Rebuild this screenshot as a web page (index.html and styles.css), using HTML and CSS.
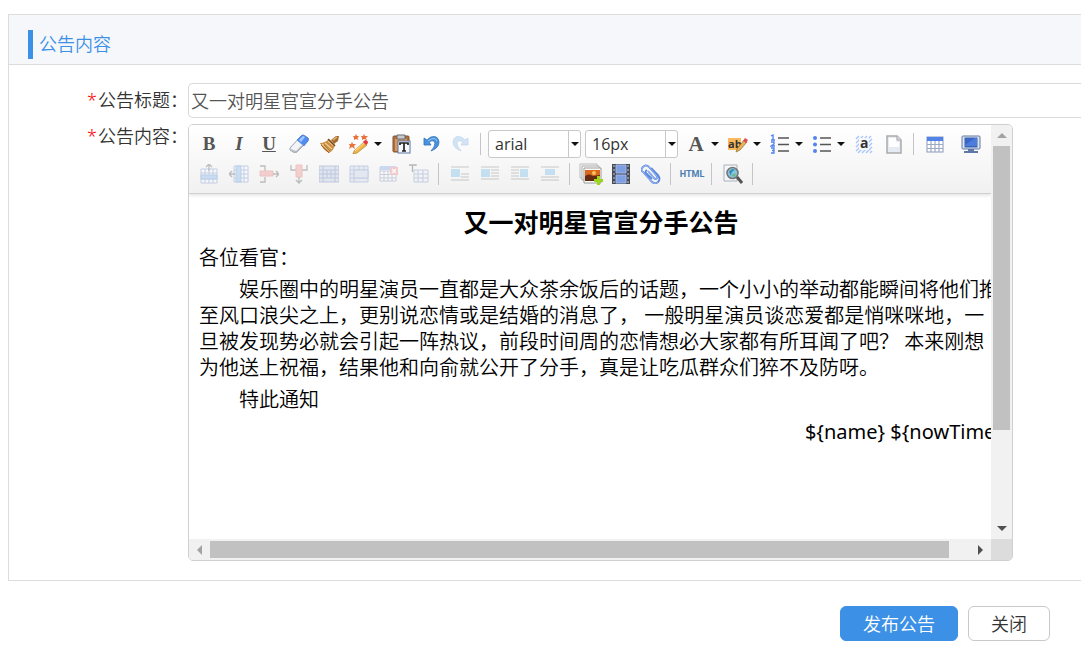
FILE: index.html
```html
<!DOCTYPE html>
<html lang="zh-CN">
<head>
<meta charset="utf-8">
<title>公告内容</title>
<link rel="stylesheet" href="styles.css">
</head>
<body>
<form class="page">
  <section class="panel">
    <header class="panel-head"><h1 class="panel-title">公告内容</h1></header>
    <div class="fields">
      <label class="label" for="title"><span class="star">*</span>公告标题：</label>
      <input class="text-input" id="title" type="text" value="又一对明星官宣分手公告">
      <div class="label label-top" id="content-label"><span class="star">*</span>公告内容：</div>
      <div class="editor" role="group" aria-labelledby="content-label">
        <div class="view">
          <div class="toolbar">
            <div class="tools">
              <button type="button" class="tool letter bold" aria-label="加粗">B</button>
              <button type="button" class="tool letter italic" aria-label="斜体">I</button>
              <button type="button" class="tool letter under" aria-label="下划线">U</button>
              <button type="button" class="tool" aria-label="清除格式"><svg viewBox="0 0 20 20"><path d="M1 14 12 2q2-2 4 0l3 2q1 1 0 3L8 18q-2 1-4 0l-3-2z" fill="#f3f4f7" stroke="#9aa0ad"/><path d="m8 6 4-4q2-2 4 0l3 2q1 1 0 3l-4 5z" fill="#4f8df0" stroke="#4478d4" stroke-width=".6"/><path d="m10 6 4-4 2 1-4 5z" fill="#a4c8ff"/><path d="m2 15 5 2 7-7v2l-7 7-5-3z" fill="#b4b8c2"/></svg></button>
              <button type="button" class="tool" aria-label="格式刷"><svg viewBox="0 0 20 20"><path d="m12 6 5-4h3l-1 5-4 3z" fill="#a86c2e"/><path d="m14 6 4-3" stroke="#e6b878" stroke-width="1.5"/><path d="M1 9q5 0 9-4l6 6q-1 5-6 8-6-3-9-10z" fill="#c78c45"/><path d="m3 10 8 7M6 9l7 6M9 7l6 5" stroke="#f3cd8b" stroke-width="1.3"/><path d="m9 5 7 7" stroke="#7a4817" stroke-width="1.4"/><path d="m2 11 8 8M5 11l6 6" stroke="#8c5520" stroke-width=".7"/></svg></button>
              <button type="button" class="tool" aria-label="自动排版"><svg viewBox="0 0 20 20"><path d="m7 0 1 2 2 0-1.500 2 1 2-2.500-1-2 1v-2L4 2h2zM15 0l1 2h3l-2 2 1 2-3-1-2 1V4l-1-2h2zM3 8l1 2 3 0-2 2 1 3-3-2-3 2 1-3-1-2h2z" fill="#e8713c"/><path d="m5 17 10-9 3 3L8 19l-4 1z" fill="#f1b64b" stroke="#b97c22" stroke-width=".7"/><path d="m14 8 2-2q3 0 3 3l-2 2z" fill="#e5383f"/><path d="m6 17 9-8" stroke="#ffe297"/></svg></button>
              <span class="caret"></span>
              <button type="button" class="tool" aria-label="粘贴"><svg viewBox="0 0 20 20"><rect x="2" y="2" width="16" height="16" rx="1" fill="#ae7142" stroke="#875028"/><rect x="4" y="5" width="12" height="12" fill="#d79963"/><path d="M6 1h8v4H6z" fill="#c9cbd0" stroke="#666b73"/><rect x="7" y="7" width="12" height="12" fill="#f5f8ff" stroke="#5d77a4"/><path d="M9 11V9h8v2M13 9v8M11 17h4" fill="none" stroke="#222" stroke-width="1.700"/></svg></button>
              <button type="button" class="tool" aria-label="撤销"><svg viewBox="0 0 20 20"><path d="M3 4v7h7L8 8q5-3 6 1 0 4-4 8 8-3 8-9-1-7-8-5-2 1-4 3z" fill="#4a93df" stroke="#2f72bd" stroke-width=".8"/><path d="M7 7q7-5 9 0" fill="none" stroke="#9bcaf5"/></svg></button>
              <button type="button" class="tool off" disabled aria-label="重做"><svg viewBox="0 0 20 20"><path d="M17 4v7h-7l2-3q-5-3-6 1 0 4 4 8-8-3-8-9 1-7 8-5 2 1 4 3z" fill="#86b9e8" stroke="#5a98d3" stroke-width=".8"/></svg></button>
              <span class="sep"></span>
              <span class="combo"><select class="combo-select" aria-label="字体"><option>arial</option></select><span class="combo-arrow"><span class="triangle"></span></span></span>
              <span class="combo"><select class="combo-select" aria-label="字号"><option>16px</option></select><span class="combo-arrow"><span class="triangle"></span></span></span>
              <button type="button" class="tool letter large" aria-label="字体颜色">A</button>
              <span class="caret"></span>
              <button type="button" class="tool" aria-label="背景色"><svg viewBox="0 0 20 20"><rect y="4" width="13" height="12" fill="#fbb95c"/><text x="0" y="14" class="icon-ab">ab</text><path d="m9 15 7-9 3 2-7 8-4 2z" fill="#e8b35a" stroke="#936824" stroke-width=".7"/><path d="m15 7 2-3 3 2-2 3z" fill="#e64b50"/></svg></button>
              <span class="caret"></span>
              <button type="button" class="tool" aria-label="有序列表"><svg viewBox="0 0 20 20"><path d="M8 4h11M8 10.500h11M8 17h11" stroke="#555" stroke-width="1.400"/><path d="m1 2 2-1v5M1 6h4M1 8h3v2L1 12h4M1 14h3v5H1M2 16.500h2" fill="none" stroke="#4e7ff0" stroke-width="1.300"/></svg></button>
              <span class="caret"></span>
              <button type="button" class="tool" aria-label="无序列表"><svg viewBox="0 0 20 20"><path d="M8 4h11M8 10.500h11M8 17h11" stroke="#555" stroke-width="1.400"/><g fill="#5582f1"><circle cx="3" cy="4" r="2"/><circle cx="3" cy="10.500" r="2"/><circle cx="3" cy="17" r="2"/></g></svg></button>
              <span class="caret"></span>
              <button type="button" class="tool" aria-label="全选"><svg viewBox="0 0 20 20"><path d="m2 5 3-3M2 9l7-7M2 13 13 2M2 17 17 2M4 19 18 5M8 19 18 9M12 19l6-6M16 19l2-2" stroke="#a9c6fa" stroke-width="1.400"/><rect x="5" y="4" width="10" height="12" fill="#f6f8fc"/><text x="6" y="14" class="icon-a">a</text></svg></button>
              <button type="button" class="tool" aria-label="清空文档"><svg viewBox="0 0 20 20"><path d="M3 2h10l4 4v13H3z" fill="#e6eaf3" stroke="#aaa" stroke-width="1.500"/><path d="M5 4h7v4h3v5H5z" fill="#fff"/><path d="M13 2v4h4" fill="#ddd" stroke="#aaa"/></svg></button>
              <span class="sep"></span>
              <button type="button" class="tool" aria-label="插入表格"><svg viewBox="0 0 20 20"><rect x="2" y="3" width="16" height="15" fill="#fff" stroke="#8798b9"/><path d="M2 3h16v4H2z" fill="#4f83e8"/><path d="M2 10.500h16M2 14.500h16M6 7v11M10 7v11M14 7v11" stroke="#9caac4" stroke-width="1.200"/></svg></button>
              <button type="button" class="tool monitor" aria-label="预览全屏"><svg viewBox="0 0 20 20"><rect x="1" y="2" width="18" height="13" rx="1" fill="#dfe6f2" stroke="#60789f"/><rect x="4" y="4" width="12" height="9" fill="#3767ca" stroke="#3f63b0"/><path d="m4 11 10-7h2v8H4z" fill="#4e7cdb"/><path d="M7 15h6v2h4v2H3v-2h4z" fill="#5f78a8"/></svg></button>
            </div>
            <div class="tools">
              <button type="button" class="tool off" disabled aria-label="前插入行"><svg viewBox="0 0 20 20"><path d="M2 5h16v14H2zM2 9h16M2 15h16M6 5v14M10 5v14M14 5v14" fill="#fff" stroke="#6689ca"/><path d="M2 11h16v4H2z" fill="#79afe9" stroke="#538cd2"/><path d="M10 7V1M7 3l3-3 3 3" fill="none" stroke="#555" stroke-width="1.300"/></svg></button>
              <button type="button" class="tool off" disabled aria-label="前插入列"><svg viewBox="0 0 20 20"><path d="M5 2h14v16H5zM5 6h14M5 10h14M5 14h14M15 2v16" fill="#fff" stroke="#6689ca"/><path d="M7 2h5v16H7z" fill="#79afe9" stroke="#538cd2"/><path d="M6 10H1M3 7l-3 3 3 3" fill="none" stroke="#555" stroke-width="1.300"/></svg></button>
              <button type="button" class="tool off" disabled aria-label="右合并单元格"><svg viewBox="0 0 20 20"><path d="M1 2h5v5M1 18h5v-5" fill="none" stroke="#555" stroke-width="1.300"/><path d="M1 7h13v5H1z" fill="#ef8888" stroke="#df6464"/><path d="M14 10h5M17 7l3 3-3 3" fill="none" stroke="#555" stroke-width="1.300"/></svg></button>
              <button type="button" class="tool off" disabled aria-label="下合并单元格"><svg viewBox="0 0 20 20"><path d="M2 1v5h5M18 1v5h-5" fill="none" stroke="#555" stroke-width="1.300"/><path d="M7 1h6v12H7z" fill="#ef8888" stroke="#df6464"/><path d="M10 13v6M7 16l3 3 3-3" fill="none" stroke="#555" stroke-width="1.300"/></svg></button>
              <button type="button" class="tool off" disabled aria-label="拆分单元格"><svg viewBox="0 0 20 20"><path d="M0 2h20v16H0zM0 6h20M0 10h20M0 14h20M4 2v16M8 6v8M12 6v8M16 2v16" fill="#bccbe5" stroke="#5b76b7"/></svg></button>
              <button type="button" class="tool off" disabled aria-label="合并单元格"><svg viewBox="0 0 20 20"><path d="M1 2h18v16H1zM1 6h18M5 2v16M1 10h4M1 14h18M15 2v4M10 2v4" fill="#d0daed" stroke="#6e86c0"/><path d="M5 6h14v8H5z" fill="#c2d0e9" stroke="#6e86c0"/></svg></button>
              <button type="button" class="tool off" disabled aria-label="删除表格"><svg viewBox="0 0 20 20"><path d="M1 3h16v14H1zM1 7h16M1 10.500h16M1 14h16M5 7v10M9 7v10M13 7v10" fill="#fff" stroke="#7788ad"/><path d="M1 2h16v4H1z" fill="#79a3e9"/><rect x="11" y="3" width="8" height="8" fill="#ee7777"/><path d="m13 5 4 4M17 5l-4 4" stroke="#fff" stroke-width="1.500"/></svg></button>
              <button type="button" class="tool off" disabled aria-label="表格前插入行"><svg viewBox="0 0 20 20"><path d="M0 2V1h7v1M3.500 1v7" fill="none" stroke="#444" stroke-width="1.400"/><path d="M5 6h14v12H5zM5 10h14M5 14h14M9 6v12M14 6v12" fill="#edf1fb" stroke="#6f86b9"/></svg></button>
              <span class="sep"></span>
              <button type="button" class="tool off" disabled aria-label="左浮动"><svg viewBox="0 0 20 20"><path d="M1 3h18M11 10h8M11 13h8M1 16h18" stroke="#777" stroke-width="1.200"/><path d="M1 5h9v8H1z" fill="#68b9e8"/></svg></button>
              <button type="button" class="tool off" disabled aria-label="默认"><svg viewBox="0 0 20 20"><path d="M1 3h18M11 6h8M11 9h8M11 12h8M1 15h18" stroke="#777" stroke-width="1.200"/><path d="M1 5h9v8H1z" fill="#68b9e8"/></svg></button>
              <button type="button" class="tool off" disabled aria-label="右浮动"><svg viewBox="0 0 20 20"><path d="M1 3h18M1 6h8M1 9h8M1 12h8M1 15h18" stroke="#777" stroke-width="1.200"/><path d="M10 5h8v8h-8z" fill="#68b9e8"/></svg></button>
              <button type="button" class="tool off" disabled aria-label="居中"><svg viewBox="0 0 20 20"><path d="M1 3h18M1 13h18M1 16h18" stroke="#777" stroke-width="1.200"/><path d="M5 5h10v6H5z" fill="#68b9e8"/></svg></button>
              <span class="sep"></span>
              <button type="button" class="tool" aria-label="图片"><svg class="big" viewBox="0 0 24 22"><path d="M1 1h17v14H1z" fill="#f6f6f6" stroke="#bbb"/><path d="M3 3h17v14H3z" fill="#fff" stroke="#aaa"/><path d="M5 5h17v15H5z" fill="#fff" stroke="#999"/><path d="M6 7h15v11H6z" fill="#d9681e"/><path d="M6 13q4-3 8 0l7-1v6H6z" fill="#662a12"/><circle cx="15" cy="10" r="2" fill="#ffc05e"/><path d="M18 13h3v3h3v3h-3v3h-3v-3h-3v-3h3z" fill="#9bd61c"/></svg></button>
              <button type="button" class="tool" aria-label="视频"><svg viewBox="0 0 20 20"><path d="M1 0h18v20H1z" fill="#444b59"/><path d="M5 1h10v8H5zM5 11h10v8H5z" fill="#7e9fe2" stroke="#a4b9e8"/><path d="M3 1v18M17 1v18" stroke="#ccc" stroke-width="1" stroke-dasharray="2 2"/></svg></button>
              <button type="button" class="tool" aria-label="附件"><svg viewBox="0 0 20 20"><path d="m7 7 6 7q2 2 3 0 1-1-1-3L8 3Q5 0 2 3T2 8l8 9q4 4 7 1t0-7l-7-7M6 6Q3 8 6 10l5 5" fill="none" stroke="#5c88de" stroke-width="1.800"/><path d="m7 7 6 7q2 2 3 0 1-1-1-3L8 3Q5 0 2 3T2 8l8 9q4 4 7 1" fill="none" stroke="#b5cdfa" stroke-width=".7"/></svg></button>
              <span class="sep"></span>
              <button type="button" class="tool html" aria-label="源代码">HTML</button>
              <span class="sep"></span>
              <button type="button" class="tool" aria-label="查询替换"><svg viewBox="0 0 20 20"><path d="M1 1h13v16H1z" fill="#f4f6fa" stroke="#aab0bd"/><circle cx="9.500" cy="9" r="5.500" fill="#86c7df" stroke="#777" stroke-width="1.600"/><path d="M6 8q3-5 6-2-4 1-4 6z" fill="#388bb1"/><path d="M9 11q3-3 4 0l-3 2z" fill="#6ab982"/><path d="m14 13 5 6" stroke="#555" stroke-width="3"/></svg></button>
              <span class="sep"></span>
            </div>
          </div>
          <div class="document" contenteditable="true">
            <div class="sheet">
              <h2 class="doc-title">又一对明星官宣分手公告</h2>
              <p class="para">各位看官：</p>
              <p class="para indent">娱乐圈中的明星演员一直都是大众茶余饭后的话题，一个小小的举动都能瞬间将他们推至风口浪尖之上，更别说恋情或是结婚的消息了， 一般明星演员谈恋爱都是悄咪咪地，一旦被发现势必就会引起一阵热议，前段时间周的恋情想必大家都有所耳闻了吧？ 本来刚想为他送上祝福，结果他和向俞就公开了分手，真是让吃瓜群众们猝不及防呀。</p>
              <p class="para indent">特此通知</p>
              <p class="para sign">${name} ${nowTime}</p>
            </div>
          </div>
        </div>
        <div class="vbar"><span class="arrow up"></span><span class="vthumb"></span><span class="arrow down"></span></div>
        <div class="hbar"><span class="arrow left"></span><span class="hthumb"></span><span class="arrow right"></span></div>
        <div class="corner"></div>
      </div>
    </div>
  </section>
  <footer class="actions">
    <button type="submit" class="btn primary">发布公告</button>
    <button type="button" class="btn">关闭</button>
  </footer>
</form>
</body>
</html>
```
FILE: styles.css
```css
* { box-sizing: border-box; }
body {
  margin: 0;
  background: #fff;
  color: #333;
  font-family: "Noto Sans", "Noto Sans CJK SC", sans-serif;
  font-size: 18px;
  font-weight: 350;
}
button, input, select { font: inherit; color: inherit; }
.page { padding: 14px 0 10px 8px; overflow: hidden; }
.panel { border: 1px solid #dcdcdc; border-right: 0; }
.panel-head {
  height: 50px;
  padding: 15px 19px 5px;
  background: #f5f7fb;
  border-bottom: 1px solid #dcdcdc;
}
.panel-title {
  margin: 0;
  padding-left: 6px;
  border-left: 5px solid #3c91e6;
  color: #3c91e6;
  font-size: 18px;
  font-weight: 350;
  line-height: 29px;
}
.fields {
  display: grid;
  grid-template-columns: 179px minmax(0, 1fr);
  row-gap: 6px;
  padding: 18px 0 19px;
}
.label { text-align: right; line-height: 34px; white-space: nowrap; }
.label-top { line-height: 25px; }
.star { margin-right: 1px; color: #f00; }
.text-input {
  width: 100%;
  height: 35px;
  padding: 0 2px 2px;
  border: 1px solid #d9d9d9;
  border-right: 0;
  border-radius: 5px 0 0 5px;
  color: #555;
  outline: 0;
}
.editor {
  display: grid;
  grid-template-columns: minmax(0, 1fr) 21px;
  grid-template-rows: auto 21px;
  max-width: 825px;
  border: 1px solid #d0d0d0;
  border-radius: 5px;
  overflow: hidden;
}
.view { display: flex; flex-direction: column; min-width: 0; overflow: hidden; }
.toolbar {
  padding: 4px 0 4px 5px;
  background: linear-gradient(#fff, #f1f1f1);
  border-bottom: 1px solid #d0d0d0;
  box-shadow: 0 1px 4px #ddd;
}
.tools { display: flex; align-items: center; height: 30px; }
.tool {
  display: flex;
  flex: none;
  align-items: center;
  justify-content: center;
  width: 30px;
  height: 30px;
  padding: 0;
  border: 0;
  background: none;
}
.tool svg { display: block; flex: none; width: 20px; height: 20px; }
.tool .big { width: 24px; height: 22px; }
.off { opacity: .35; }
.monitor { margin-left: 6px; }
.letter { color: #555; font: bold 19px "Liberation Serif", serif; }
.italic { font-style: italic; }
.under { text-decoration: underline; }
.large { font-size: 21px; }
.html { color: #4a7db3; font: bold 9px Roboto, sans-serif; }
.icon-ab { font: bold 11px "Open Sans", sans-serif; fill: #333; }
.icon-a { font: bold 14px "Open Sans", sans-serif; fill: #333; }
.caret { flex: none; width: 12px; }
.caret::before, .triangle {
  content: "";
  display: block;
  width: 0;
  border: 4px solid transparent;
  border-top-color: #111;
  border-bottom: 0;
}
.sep { flex: none; width: 11px; height: 22px; padding-left: 4px; }
.sep::before { content: ""; display: block; width: 1px; height: 22px; background: #c5c5c9; }
.combo {
  display: flex;
  flex: none;
  width: 93px;
  height: 28px;
  margin: 0 3px 0 1px;
  border: 1px solid #c8c8c8;
  border-radius: 3px;
  background: #fff;
}
.combo-select {
  flex: 1;
  min-width: 0;
  padding: 0 6px;
  border: 0;
  background: none;
  appearance: none;
  font-family: "Open Sans", sans-serif;
  font-size: 16px;
  font-weight: 400;
}
.combo-arrow { display: flex; align-items: center; justify-content: center; width: 12px; border-left: 1px solid #c8c8c8; }
.document { min-height: 345px; padding: 11px 0 0 10px; color: #000; outline: 0; overflow: hidden; }
.sheet { width: 804px; }
.doc-title { margin: 0; text-align: center; font-size: 25px; font-weight: 700; line-height: 34px; }
.para { margin: 6px 0; font-size: 20px; line-height: 26px; }
.indent { text-indent: 2em; }
.sign { text-align: right; font-weight: 400; }
.vbar, .hbar { display: flex; align-items: center; background: #f1f1f1; }
.vbar { flex-direction: column; }
.vthumb { width: 17px; flex: 283 0 0; background: #c1c1c1; }
.vbar::after { content: ""; flex: 88 0 0; order: 1; }
.hthumb { height: 17px; flex: 739 0 0; background: #c1c1c1; }
.hbar::after { content: ""; flex: 21 0 0; order: 1; }
.arrow { display: flex; flex: none; align-items: center; justify-content: center; width: 21px; height: 21px; }
.down, .right { order: 2; }
.arrow::before { content: ""; border: 5px solid transparent; }
.up::before { border-bottom-color: #a3a3a3; border-top: 0; }
.down::before { border-top-color: #505050; border-bottom: 0; }
.left::before { border-right-color: #a3a3a3; border-left: 0; }
.right::before { border-left-color: #505050; border-right: 0; }
.corner { background: #dcdcdc; }
.actions { display: flex; justify-content: flex-end; gap: 10px; padding: 25px 31px 0 0; }
.btn {
  height: 35px;
  padding: 0 22px 2px;
  border: 1px solid #c9c9c9;
  border-radius: 6px;
  background: #fff;
}
.primary { border-color: #3c91e6; background: #3c91e6; color: #fff; }
```
